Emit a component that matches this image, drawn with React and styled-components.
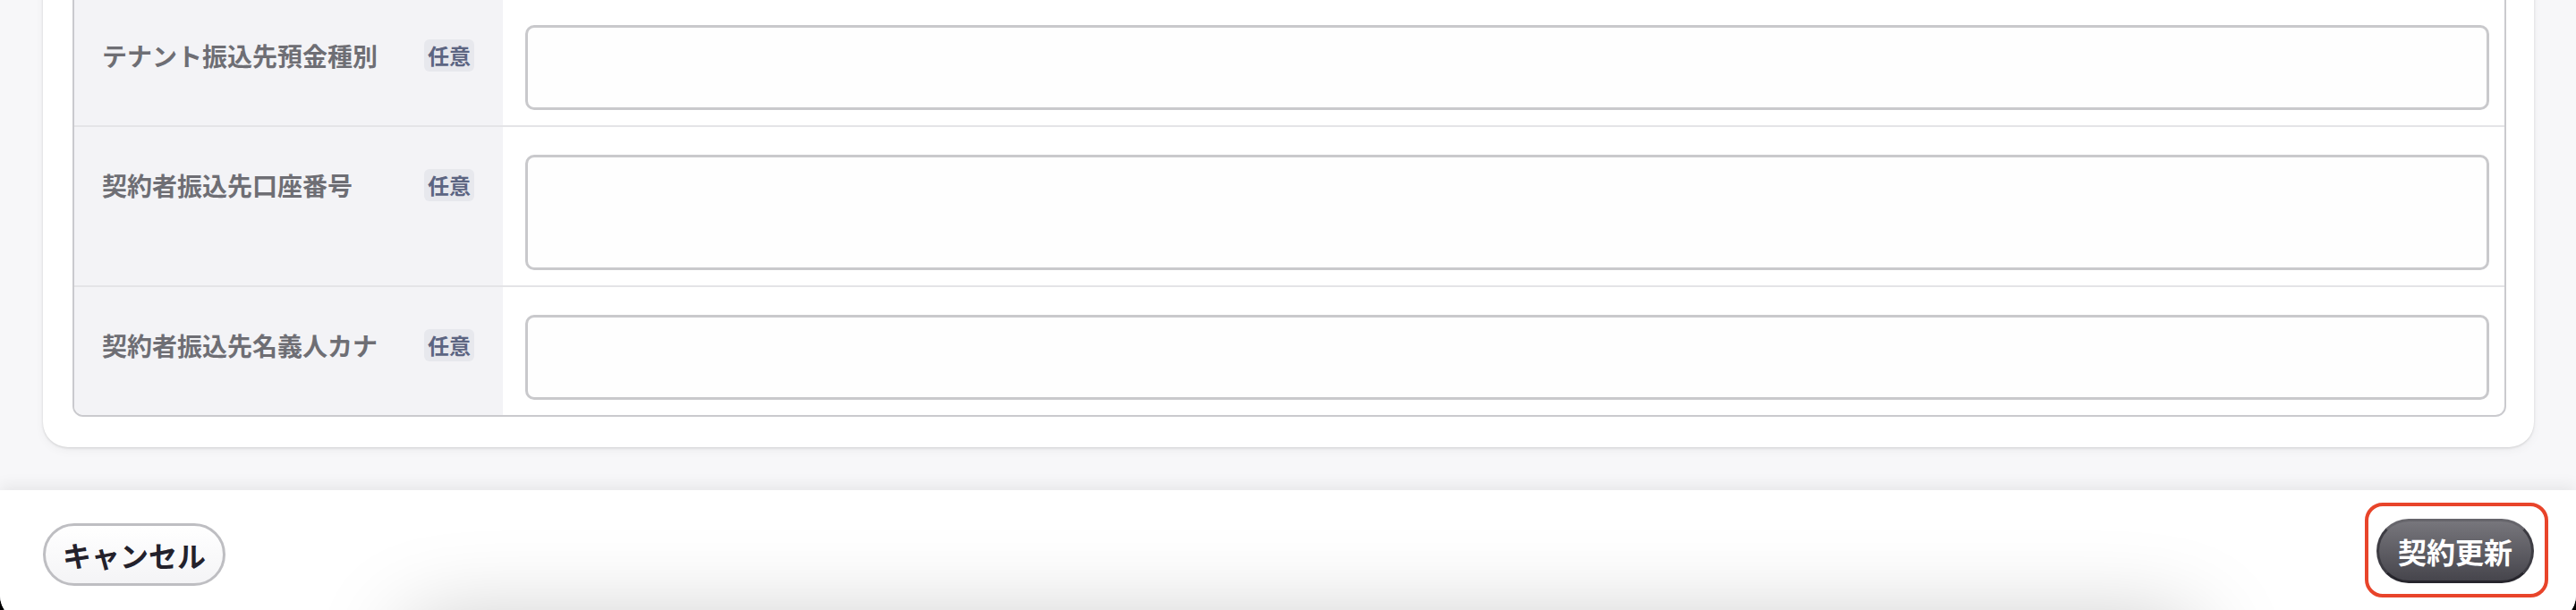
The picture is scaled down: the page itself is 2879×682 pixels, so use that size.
import React from "react";
import styled, { createGlobalStyle } from "styled-components";

const GlobalStyle = createGlobalStyle`
  html, body {
    margin: 0;
    padding: 0;
    overflow: hidden;
    background: #000;
  }
  * { box-sizing: border-box; }
  body {
    font-family: "Noto Sans CJK JP", "Noto Sans", sans-serif;
  }
`;

const Window = styled.div`
  position: relative;
  width: 2879px;
  height: 694px;
  border-radius: 0 0 28px 28px;
  overflow: hidden;
  background: #f7f7f9;
  display: flex;
  flex-direction: column;
`;

const Main = styled.main`
  height: 548px;
  flex: none;
  display: flex;
  flex-direction: column;
  justify-content: flex-end;
  overflow: hidden;
  padding: 0 47px 48px 48px;
`;

const Card = styled.section`
  flex: none;
  background: #fff;
  border-radius: 28px;
  padding: 32px 31px 34px 33px;
  box-shadow: 0 1px 3px rgba(0, 0, 0, 0.14), 0 4px 12px rgba(0, 0, 0, 0.04);
`;

const Table = styled.div`
  border: 2px solid #cacace;
  border-radius: 12px;
  overflow: hidden;
  background: #fff;
`;

const Row = styled.div`
  display: grid;
  grid-template-columns: 479px 1fr;
  & + & {
    border-top: 2px solid #e4e4e7;
  }
`;

const LabelCell = styled.div`
  background: #f3f3f6;
  padding: ${(p) => 47 + p.$lead}px 32px 0 31px;
  display: flex;
  align-items: flex-start;
  justify-content: space-between;
`;

const LabelText = styled.span`
  font-size: 28px;
  line-height: 36px;
  font-weight: 700;
  color: #6e6e74;
  white-space: nowrap;
`;

const Badge = styled.span`
  font-size: 24px;
  line-height: 36px;
  font-weight: 700;
  color: #5c6582;
  background: #e7e8ed;
  border-radius: 6px;
  padding: 0 4px;
`;

const FieldCell = styled.div`
  padding: ${(p) => 31 + p.$lead}px 17px 17px 25px;
`;

const Input = styled.div`
  height: ${(p) => p.$h}px;
  background: #fefefe;
  border: 3px solid #c9c9cc;
  border-radius: 10px;
`;

const Footer = styled.footer`
  position: relative;
  z-index: 1;
  flex: 1;
  background: #fff;
  box-shadow: 0 -5px 16px rgba(0, 0, 0, 0.07);
  padding: 14px 31px 0 48px;
  display: flex;
  align-items: flex-start;
  justify-content: space-between;
`;

const BaseButton = styled.button`
  font-family: "Noto Sans CJK JP", "Noto Sans", sans-serif;
  font-size: 32px;
  font-weight: 700;
  line-height: 1;
  border-radius: 999px;
  display: flex;
  align-items: center;
  justify-content: center;
  cursor: pointer;
`;

const CancelButton = styled(BaseButton)`
  margin-top: 23px;
  height: 70px;
  padding: 0 19px;
  color: #23212b;
  background: linear-gradient(#ffffff, #f4f4f6);
  border: 3px solid #bebec2;
`;

const FocusFrame = styled.div`
  border: 4px solid #e8442a;
  border-radius: 20px;
  padding: 14px 12px 12px 9px;
`;

const SubmitButton = styled(BaseButton)`
  height: 72px;
  padding: 0 21px;
  color: #fff;
  background: linear-gradient(#77767c, #46454c);
  border: 3px solid;
  border-color: #66656b #3d3c43 #27262d #3d3c43;
`;

const BottomGlow = styled.div`
  position: absolute;
  left: 450px;
  right: 420px;
  top: 150px;
  height: 80px;
  border-radius: 40px;
  background: #ccc;
  box-shadow: 0 0 100px 0 rgba(0, 0, 0, 0.25);
  pointer-events: none;
`;

const rows = [
  { label: "テナント振込先預金種別", h: 95, lead: 240 },
  { label: "契約者振込先口座番号", h: 129, lead: 0 },
  { label: "契約者振込先名義人カナ", h: 95, lead: 0 },
];

export default function App() {
  return (
    <>
      <GlobalStyle />
      <Window>
        <Main>
          <Card>
            <Table>
              {rows.map((r) => (
                <Row key={r.label}>
                  <LabelCell $lead={r.lead}>
                    <LabelText>{r.label}</LabelText>
                    <Badge>任意</Badge>
                  </LabelCell>
                  <FieldCell $lead={r.lead}>
                    <Input $h={r.h} />
                  </FieldCell>
                </Row>
              ))}
            </Table>
          </Card>
        </Main>
        <Footer>
          <CancelButton type="button">キャンセル</CancelButton>
          <FocusFrame>
            <SubmitButton type="button">契約更新</SubmitButton>
          </FocusFrame>
          <BottomGlow />
        </Footer>
      </Window>
    </>
  );
}
